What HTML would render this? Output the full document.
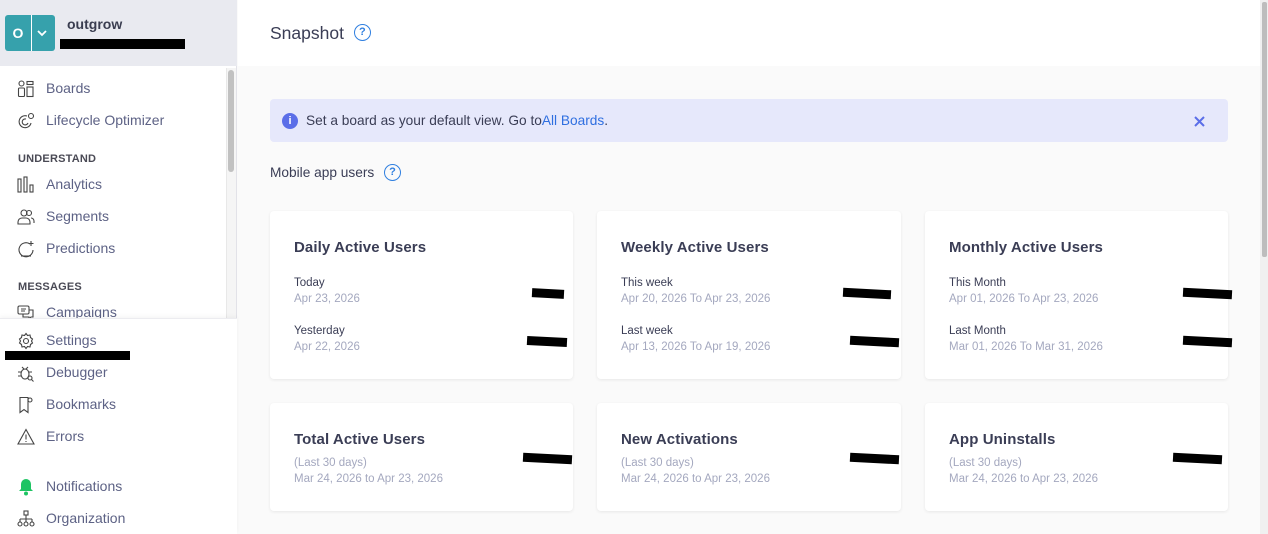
<!DOCTYPE html>
<html><head><style>
*{box-sizing:border-box;margin:0;padding:0}
body{width:1268px;height:534px;overflow:hidden;font-family:"Liberation Sans",sans-serif;background:#fafafa;position:relative}
.sb{position:absolute;left:0;top:0;width:237px;height:534px;background:#fff;border-right:1px solid #e2e2e8}
.sbh{position:absolute;left:0;top:0;width:237px;height:66px;background:#e9eaf0}
.logo{position:absolute;left:5px;top:15px;width:50px;height:36px;background:#36a1ac;border-radius:3px;color:#fff}
.logo .l{position:absolute;left:0;top:0;width:27px;height:36px;border-right:1px solid #fff;font-weight:bold;font-size:14px;line-height:36px;text-align:center}
.it{position:absolute;left:46px;font-size:14px;color:#5d6285}
.ic{position:absolute;left:17px;width:18px;height:18px}
.sec{position:absolute;left:18px;font-size:11px;font-weight:bold;color:#4a4a55;letter-spacing:.2px}
.blk{position:absolute;background:#000}
.main{position:absolute;left:238px;top:0;width:1022px;height:66px;background:#fff}
.card{position:absolute;background:#fff;border-radius:4px;box-shadow:0 1px 3px rgba(0,0,0,.08)}
.ct{position:absolute;left:24px;font-size:15px;color:#3a3d55;font-weight:bold;letter-spacing:.1px}
.lb{position:absolute;left:24px;font-size:11.5px;color:#3a3d55}
.dt{position:absolute;left:24px;font-size:11.5px;color:#a4a8bf}
.q{display:inline-block;width:17px;height:17px;border:1.6px solid #2f7fe0;border-radius:50%;color:#2f7fe0;font-size:11px;font-weight:bold;text-align:center;line-height:14px;vertical-align:middle}
</style></head><body>
<div class="sb">
<div class="sbh"></div>
<div class="logo"><div class="l">O</div><svg style="position:absolute;left:31px;top:13px" width="12" height="10"><path d="M2 3l4 4 4-4" stroke="#fff" stroke-width="1.8" fill="none"/></svg></div>
<div style="position:absolute;left:67px;top:16px;font-size:14px;font-weight:bold;color:#3a3d50">outgrow</div>
<div class="blk" style="left:60px;top:39px;width:125px;height:10px"></div>
<div style="position:absolute;left:226px;top:68px;width:10px;height:250px;background:#f5f5f5;border-left:1px solid #e8e8e8"></div>
<div style="position:absolute;left:228px;top:70px;width:6px;height:102px;background:#c1c1c1;border-radius:3px"></div>

<svg class="ic" style="top:80px" viewBox="0 0 18 18" fill="none" stroke="#444" stroke-width="1.1"><circle cx="4.5" cy="3.5" r="2.5"/><rect x="1.5" y="8" width="6" height="8.5" rx="1"/><rect x="10" y="1.5" width="6" height="3"/><rect x="10" y="7" width="6" height="9.5"/></svg>
<div class="it" style="top:80px">Boards</div>
<svg class="ic" style="top:112px" viewBox="0 0 18 18" fill="none" stroke="#444" stroke-width="1.1"><path d="M10 4a6 6 0 1 0 4 7"/><path d="M9 7a3 3 0 1 0 2 4"/><circle cx="14" cy="4" r="2.5"/></svg>
<div class="it" style="top:112px">Lifecycle Optimizer</div>
<div class="sec" style="top:153px">UNDERSTAND</div>
<svg class="ic" style="top:176px" viewBox="0 0 18 18" fill="none" stroke="#444" stroke-width="1.1"><rect x="1" y="3" width="3" height="13"/><rect x="7" y="1" width="3" height="15"/><rect x="13" y="9" width="3" height="7"/></svg>
<div class="it" style="top:176px">Analytics</div>
<svg class="ic" style="top:208px" viewBox="0 0 18 18" fill="none" stroke="#444" stroke-width="1.1"><circle cx="7" cy="5" r="3"/><circle cx="12" cy="5" r="2.5"/><path d="M1 16v-2a4 4 0 0 1 4-4h4a4 4 0 0 1 4 4v2z"/><path d="M14 10a3 3 0 0 1 3 3v2"/></svg>
<div class="it" style="top:208px">Segments</div>
<svg class="ic" style="top:240px" viewBox="0 0 18 18" fill="none" stroke="#444" stroke-width="1.1"><path d="M13 4A7 7 0 1 0 16 10"/><path d="M4 16h10"/><path d="M14 1v5M11.5 3.5h5"/></svg>
<div class="it" style="top:240px">Predictions</div>
<div class="sec" style="top:281px">MESSAGES</div>
<svg class="ic" style="top:304px" viewBox="0 0 18 18" fill="none" stroke="#444" stroke-width="1.1"><rect x="1" y="2" width="11" height="8" rx="1.5"/><path d="M4 5h5M4 7h4"/><path d="M12 6h4v7h-2l-2 2v-2H6v-3"/></svg>
<div class="it" style="top:304px">Campaigns</div>
<div style="position:absolute;left:0;top:318px;width:237px;height:216px;background:#fff;border-top:1px solid #ececf0;box-shadow:0 -2px 4px rgba(0,0,0,.04)"></div>
<svg class="ic" style="top:332px" viewBox="0 0 18 18" fill="none" stroke="#444" stroke-width="1.1"><circle cx="9" cy="9" r="2.5"/><path d="M9 1.5l1.5 2 2.5-.5.5 2.5 2 1.5-1 2 1 2-2 1.5-.5 2.5-2.5-.5L9 16.5l-1.5-2-2.5.5-.5-2.5-2-1.5 1-2-1-2 2-1.5.5-2.5 2.5.5z"/></svg>
<div class="it" style="top:332px">Settings</div>
<div class="blk" style="left:5px;top:351px;width:125px;height:9px"></div>
<svg class="ic" style="top:364px" viewBox="0 0 18 18" fill="none" stroke="#444" stroke-width="1.1"><ellipse cx="8" cy="10" rx="4" ry="5"/><path d="M5 3l2 2M11 3l-2 2M1 8h3M1 12h3M12 8h3"/><circle cx="13" cy="14" r="2"/><path d="M14.5 15.5l2 2"/></svg>
<div class="it" style="top:364px">Debugger</div>
<svg class="ic" style="top:396px" viewBox="0 0 18 18" fill="none" stroke="#444" stroke-width="1.1"><path d="M3 1.5h8v15l-4-3-4 3z"/><circle cx="13" cy="4" r="2"/></svg>
<div class="it" style="top:396px">Bookmarks</div>
<svg class="ic" style="top:428px" viewBox="0 0 18 18" fill="none" stroke="#444" stroke-width="1.1"><path d="M9 1.5L17 16H1z"/><path d="M9 6.5v5M9 13v1"/></svg>
<div class="it" style="top:428px">Errors</div>
<svg class="ic" style="top:478px" viewBox="0 0 18 18" fill="#1ec463"><path d="M9 1a5 5 0 0 1 5 5v5l2 2H2l2-2V6a5 5 0 0 1 5-5z"/><circle cx="9" cy="15.5" r="2"/></svg>
<div class="it" style="top:478px">Notifications</div>
<svg class="ic" style="top:510px" viewBox="0 0 18 18" fill="none" stroke="#444" stroke-width="1.1"><rect x="7" y="1" width="4" height="4"/><path d="M9 5v4M3 9h12M3 9v3M9 9v3M15 9v3"/><circle cx="3" cy="14" r="2"/><circle cx="9" cy="14" r="2"/><circle cx="15" cy="14" r="2"/></svg>
<div class="it" style="top:510px">Organization</div>
</div>

<div class="main"></div>
<div style="position:absolute;left:1260px;top:0;width:8px;height:534px;background:#f0f0f0"></div>
<div style="position:absolute;left:1262px;top:2px;width:5px;height:255px;background:#bdbdbd;border-radius:2px"></div>
<div style="position:absolute;left:270px;top:23px;font-size:17.5px;color:#3a3d55">Snapshot <span class="q" style="margin-left:5px;margin-top:-3px">?</span></div>

<div style="position:absolute;left:270px;top:99px;width:958px;height:43px;background:#e6e8fb;border-radius:4px"></div>
<div style="position:absolute;left:282px;top:113px;width:16px;height:16px;border-radius:50%;background:#5b6ee8;color:#fff;font-size:11px;font-weight:bold;text-align:center;line-height:16px">i</div>
<div style="position:absolute;left:306px;top:113px;font-size:13.7px;color:#3a3d55">Set a board as your default view. Go to<span style="color:#2f6fe0">All Boards</span>.</div>
<svg style="position:absolute;left:1193px;top:115px" width="13" height="13"><path d="M2 2l9 9M11 2l-9 9" stroke="#5b6ee8" stroke-width="2"/></svg>
<div style="position:absolute;left:270px;top:165px;font-size:13.7px;color:#3a3d55">Mobile app users <span class="q" style="margin-left:6px;margin-top:-2px">?</span></div>

<div class="card" style="left:270px;top:211px;width:303px;height:168px">
<div class="ct" style="top:28px">Daily Active Users</div>
<div class="lb" style="top:66px">Today</div><div class="dt" style="top:82px">Apr 23, 2026</div>
<div class="lb" style="top:114px">Yesterday</div><div class="dt" style="top:130px">Apr 22, 2026</div>
<div class="blk" style="left:262px;top:78px;width:32px;height:9px;transform:rotate(3deg)"></div>
<div class="blk" style="left:257px;top:126px;width:40px;height:9px;transform:rotate(3deg)"></div>
</div>
<div class="card" style="left:597px;top:211px;width:304px;height:168px">
<div class="ct" style="top:28px">Weekly Active Users</div>
<div class="lb" style="top:66px">This week</div><div class="dt" style="top:82px">Apr 20, 2026 To Apr 23, 2026</div>
<div class="lb" style="top:114px">Last week</div><div class="dt" style="top:130px">Apr 13, 2026 To Apr 19, 2026</div>
<div class="blk" style="left:246px;top:78px;width:48px;height:9px;transform:rotate(3deg)"></div>
<div class="blk" style="left:253px;top:126px;width:49px;height:9px;transform:rotate(3deg)"></div>
</div>
<div class="card" style="left:925px;top:211px;width:303px;height:168px">
<div class="ct" style="top:28px">Monthly Active Users</div>
<div class="lb" style="top:66px">This Month</div><div class="dt" style="top:82px">Apr 01, 2026 To Apr 23, 2026</div>
<div class="lb" style="top:114px">Last Month</div><div class="dt" style="top:130px">Mar 01, 2026 To Mar 31, 2026</div>
<div class="blk" style="left:258px;top:78px;width:49px;height:9px;transform:rotate(3deg)"></div>
<div class="blk" style="left:258px;top:126px;width:49px;height:9px;transform:rotate(3deg)"></div>
</div>
<div class="card" style="left:270px;top:403px;width:303px;height:108px">
<div class="ct" style="top:28px">Total Active Users</div>
<div class="dt" style="top:54px">(Last 30 days)</div><div class="dt" style="top:70px">Mar 24, 2026 to Apr 23, 2026</div>
<div class="blk" style="left:253px;top:51px;width:49px;height:9px;transform:rotate(3deg)"></div>
</div>
<div class="card" style="left:597px;top:403px;width:304px;height:108px">
<div class="ct" style="top:28px">New Activations</div>
<div class="dt" style="top:54px">(Last 30 days)</div><div class="dt" style="top:70px">Mar 24, 2026 to Apr 23, 2026</div>
<div class="blk" style="left:253px;top:51px;width:49px;height:9px;transform:rotate(3deg)"></div>
</div>
<div class="card" style="left:925px;top:403px;width:303px;height:108px">
<div class="ct" style="top:28px">App Uninstalls</div>
<div class="dt" style="top:54px">(Last 30 days)</div><div class="dt" style="top:70px">Mar 24, 2026 to Apr 23, 2026</div>
<div class="blk" style="left:248px;top:51px;width:49px;height:9px;transform:rotate(3deg)"></div>
</div>
</body></html>
